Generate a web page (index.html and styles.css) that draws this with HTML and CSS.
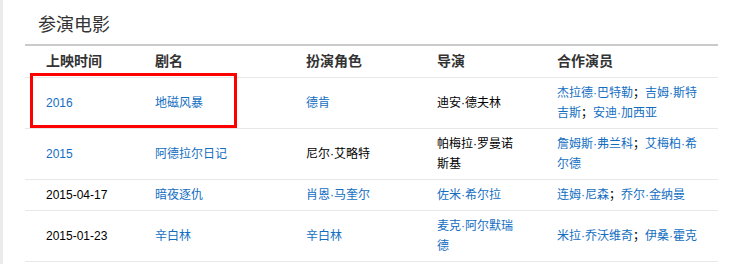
FILE: index.html
```html
<!DOCTYPE html>
<html lang="zh-CN">
<head>
<meta charset="utf-8">
<title>参演电影</title>
<link rel="stylesheet" href="styles.css">
</head>
<body>
<div class="page">
  <div class="module">
    <h2 class="title">参演电影</h2>
    <div class="table-wrap">
      <table class="films">
        <colgroup>
          <col class="c1"><col class="c2"><col class="c3"><col class="c4"><col class="c5">
        </colgroup>
        <thead>
          <tr><th>上映时间</th><th>剧名</th><th>扮演角色</th><th>导演</th><th>合作演员</th></tr>
        </thead>
        <tbody>
          <tr>
            <td><a>2016</a></td>
            <td><a>地磁风暴</a></td>
            <td><a>德肯</a></td>
            <td>迪安·德夫林</td>
            <td><a>杰拉德·巴特勒</a>；<a>吉姆·斯特吉斯</a>；<a>安迪·加西亚</a></td>
          </tr>
          <tr>
            <td><a>2015</a></td>
            <td><a>阿德拉尔日记</a></td>
            <td>尼尔·艾略特</td>
            <td>帕梅拉·罗曼诺斯基</td>
            <td><a>詹姆斯·弗兰科</a>；<a>艾梅柏·希尔德</a></td>
          </tr>
          <tr>
            <td>2015-04-17</td>
            <td><a>暗夜逐仇</a></td>
            <td><a>肖恩·马奎尔</a></td>
            <td><a>佐米·希尔拉</a></td>
            <td><a>连姆·尼森</a>；<a>乔尔·金纳曼</a></td>
          </tr>
          <tr>
            <td>2015-01-23</td>
            <td><a>辛白林</a></td>
            <td><a>辛白林</a></td>
            <td><a>麦克·阿尔默瑞德</a></td>
            <td><a>米拉·乔沃维奇</a>；<a>伊桑·霍克</a></td>
          </tr>
        </tbody>
      </table>
      <div class="highlight"></div>
    </div>
  </div>
</div>
</body>
</html>
```
FILE: styles.css
```css
html, body {
  margin: 0;
  padding: 0;
  background: #fff;
}
body {
  font-family: "Liberation Sans", "Noto Sans CJK SC", sans-serif;
  font-size: 12px;
  color: #333;
}
.page {
  width: 751px;
  height: 264px;
  box-sizing: border-box;
  border-left: 3px solid #ebebeb;
  overflow: hidden;
}
.module {
  padding-left: 22px;
  width: 693px;
}
.title {
  margin: 0;
  padding: 13px 0 7px 13px;
  font-size: 18px;
  line-height: 24px;
  font-weight: normal;
  color: #333;
}
.table-wrap {
  position: relative;
}
.films {
  width: 693px;
  table-layout: fixed;
  border-collapse: collapse;
  border-top: 2px solid #cacaca;
}
.c1 { width: 109px; }
.c2 { width: 151px; }
.c3 { width: 131px; }
.c4 { width: 120px; }
.c5 { width: 182px; }
.films th,
.films td {
  box-sizing: border-box;
  text-align: left;
  vertical-align: middle;
  padding: 5px 15px 5px 21px;
  border-bottom: 1px solid #e8e8e8;
}
.films th {
  font-size: 14px;
  font-weight: bold;
  line-height: 21px;
  color: #333;
}
.films td {
  line-height: 20px;
  color: #000;
}
.films a {
  color: #136ec2;
  text-decoration: none;
}
.highlight {
  position: absolute;
  left: 5px;
  top: 29px;
  width: 207px;
  height: 55px;
  box-sizing: border-box;
  border: 3px solid #ff0000;
}
```
